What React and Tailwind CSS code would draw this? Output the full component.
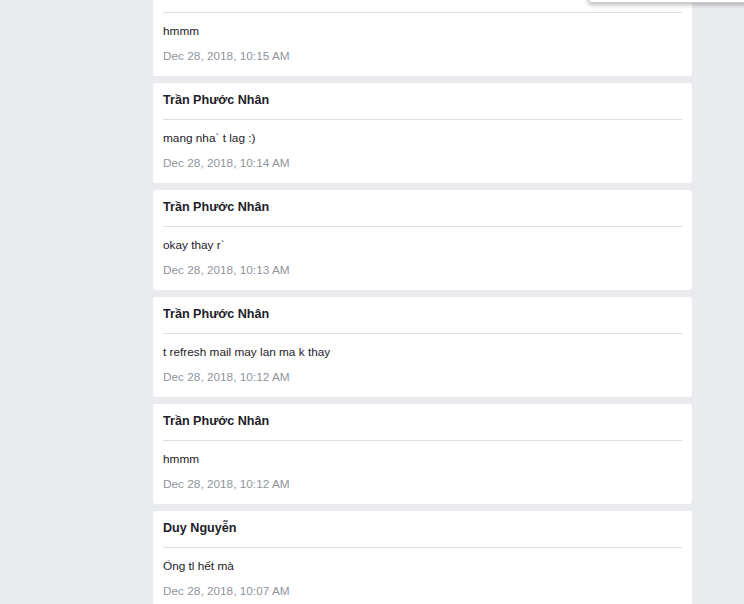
import React from "react";

const messages = [
  { id: 1, name: "Trần Phước Nhân", text: "hmmm", time: "Dec 28, 2018, 10:15 AM" },
  { id: 2, name: "Trần Phước Nhân", text: "mang nha` t lag :)", time: "Dec 28, 2018, 10:14 AM" },
  { id: 3, name: "Trần Phước Nhân", text: "okay thay r`", time: "Dec 28, 2018, 10:13 AM" },
  { id: 4, name: "Trần Phước Nhân", text: "t refresh mail may lan ma k thay", time: "Dec 28, 2018, 10:12 AM" },
  { id: 5, name: "Trần Phước Nhân", text: "hmmm", time: "Dec 28, 2018, 10:12 AM" },
  { id: 6, name: "Duy Nguyễn", text: "Ổng tl hết mà", time: "Dec 28, 2018, 10:07 AM" },
];

function MessageCard({ msg }) {
  return (
    <div className="bg-white rounded-[3px] px-[10px] h-[100px] shrink-0">
      <div className="pt-[9px] pb-[11px] border-b border-[#dddfe2] text-[12.6px] leading-[16px] font-bold text-[#1d2129]">
        {msg.name}
      </div>
      <div className="pt-[10px] text-[11.8px] leading-[16px] text-[#1d2129]">{msg.text}</div>
      <div className="mt-[9px] text-[11.8px] leading-[16px] text-[#90949c]">{msg.time}</div>
    </div>
  );
}

export default function App() {
  return (
    <div
      className="relative h-[604px] w-[744px] overflow-hidden bg-[#e9ebee]"
      style={{ fontFamily: '"Liberation Sans", Arial, sans-serif' }}
    >
      {/* message list, scrolled */}
      <div className="pl-[153px]">
        <div className="w-[539px] flex flex-col gap-[7px] -mt-[24px]">
          {messages.map((msg) => (
            <MessageCard key={msg.id} msg={msg} />
          ))}
        </div>
      </div>

      {/* dropdown peeking from top */}
      <div className="absolute left-[588px] top-[-40px] w-[170px] h-[43px] bg-white border border-[#c9ccd1] rounded-[3px] shadow-[0_2px_4px_rgba(0,0,0,0.25)]" />
    </div>
  );
}
